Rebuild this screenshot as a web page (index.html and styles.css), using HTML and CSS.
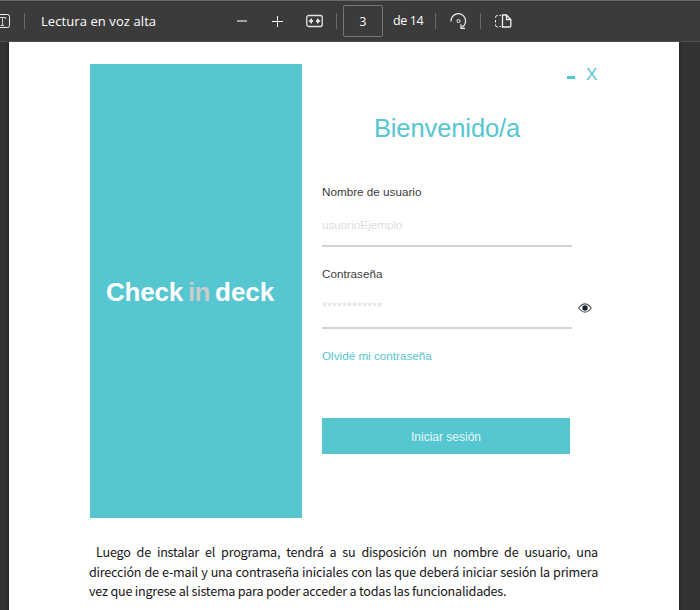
FILE: index.html
```
<!DOCTYPE html>
<html lang="es">
<head>
<meta charset="utf-8">
<title>Manual</title>
<link rel="stylesheet" href="styles.css">
</head>
<body>
<header class="toolbar">
  <svg class="icon-text" width="11" height="16" viewBox="0 0 11 16" fill="none" stroke="#f0f0f0"><path d="M0 1.500H7.500a2 2 0 0 1 2 2V12.500a2 2 0 0 1-2 2H0"/><path stroke="#d0d0d0" d="M0 4.500H5.500V6M2.500 4.500V12M0.500 12.500H4"/></svg>
  <span class="divider"></span>
  <span class="read-aloud">Lectura en voz alta</span>
  <svg class="icon-minus" width="10" height="12" viewBox="0 0 10 12"><path fill="#a2a2a2" d="M0 5h10v2H0z"/></svg>
  <svg class="icon-plus" width="11" height="12" viewBox="0 0 11 12" stroke="#fff"><path d="M0 6.500H11M5.500 1V12"/></svg>
  <svg class="icon-fit" width="17" height="14" viewBox="0 0 17 14" fill="none" stroke="#e4e4e4"><rect x=".75" y="1.500" width="15.500" height="11" rx="2" stroke-width="1.300"/><path fill="#e4e4e4" stroke="none" d="M2.500 7 6 4v2h1v2H6v2zM14.500 7 11 4v2h-1v2h1v2z"/></svg>
  <span class="divider divider-page"></span>
  <span class="page-number">3</span>
  <span class="page-total">de 14</span>
  <span class="divider divider-rotate"></span>
  <svg class="icon-rotate" width="18" height="18" viewBox="0 0 18 18" fill="none" stroke="#f0f0f0" stroke-width="1.200"><path d="M1 9.500A7.300 7.300 0 1 1 12 15.300M11 12.200V16.400H15"/><circle cx="8.500" cy="9" r="1.500" stroke="#c8c8c8"/></svg>
  <span class="divider divider-view"></span>
  <svg class="icon-view" width="17" height="14" viewBox="0 0 17 14" fill="none" stroke="#f0f0f0"><path d="M3 1.500H2.500a2 2 0 0 0-2 2V4M.5 6v2.500M.5 10.500v.5a2 2 0 0 0 2 2H3M4.500 1.500H6M4.500 12.500H6"/><path stroke-width="1.300" d="M7.500 1H11.500L15.800 5.500V12a1 1 0 0 1-1 1H7.500zM11.500 1V5.500H15.800"/></svg>
</header>
<div class="viewer">
  <main class="page">
    <section class="login">
      <div class="brand"><span class="word-check">Check</span><span class="word-in">in</span><span class="word-deck">deck</span></div>
      <div class="form">
        <div class="window-controls"><span class="minimize"></span><span class="close">X</span></div>
        <h1>Bienvenido/a</h1>
        <div class="field">
          <div class="label">Nombre de usuario</div>
          <div class="value">usuarioEjemplo</div>
        </div>
        <div class="password-row">
          <div class="field">
            <div class="label label-password">Contraseña</div>
            <div class="value value-password">************</div>
          </div>
          <svg class="eye" width="14" height="10" viewBox="0 0 14 10"><path d="M.7 5Q7-3.200 13.300 5Q7 13.200.7 5z" fill="none" stroke="#55595e" stroke-width="1.200"/><circle cx="7" cy="5" r="2.700" fill="#1c2530"/></svg>
        </div>
        <div class="forgot">Olvidé mi contraseña</div>
        <div class="submit"><span>Iniciar sesión</span></div>
      </div>
    </section>
    <div class="copy">
      <p class="line line-first">Luego de instalar el programa, tendrá a su disposición un nombre de usuario, una</p>
      <p class="line">dirección de e-mail y una contraseña iniciales con las que deberá iniciar sesión la primera</p>
      <p class="line line-last">vez que ingrese al sistema para poder acceder a todas las funcionalidades.</p>
    </div>
  </main>
</div>
</body>
</html>
```
FILE: styles.css
```
* { box-sizing: border-box; }
body { margin: 0; height: 610px; overflow: hidden; background: #333; font-family: "Liberation Sans", Arial, sans-serif; }
.toolbar { display: flex; align-items: center; height: 42px; background: #3b3b3b; border-top: 1px solid #696b6b; border-bottom: 1px solid #4e4e4e; color: #fff; font: 13px/20px "Open Sans", "Noto Sans", sans-serif; }
.toolbar > * { flex: none; }
.divider { width: 1px; height: 16px; background: #6b6b6b; margin-left: 13px; }
.read-aloud { width: 120px; margin-left: 16px; white-space: nowrap; letter-spacing: .08px; }
.icon-minus { margin-left: 76px; }
.icon-plus { margin-left: 25px; }
.icon-fit { margin-left: 23px; }
.page-number { width: 40px; height: 32px; margin-left: 6px; border: 1px solid #777; border-radius: 2px; text-align: center; font-size: 12px; line-height: 31px; }
.page-total { width: 32px; margin-left: 10px; white-space: nowrap; font-size: 12.500px; letter-spacing: -.4px; }
.divider-rotate { margin-left: 10px; }
.icon-rotate { margin-left: 14px; }
.divider-view { margin-left: 12px; }
.icon-view { margin-left: 14px; }
.viewer { height: 568px; padding: 0 21px 0 9px; background: linear-gradient(90deg, #333 4px, #2b2b2b 9px, #2b2b2b 679px, #333 684px); }
.page { height: 568px; padding: 22px 81px 0 81px; background: #fff; }
.login { display: flex; height: 454px; }
.brand { flex: none; display: flex; align-items: center; width: 212px; padding: 1px 0 0 16px; background: #56c6d1; color: #fff; font-size: 26px; font-weight: bold; line-height: 30px; white-space: nowrap; }
.word-check { width: 82px; letter-spacing: -.2px; }
.word-in { width: 27px; color: #c9cccd; letter-spacing: -.6px; }
.form { width: 296px; padding-left: 20px; color: #3c3c3c; font-size: 11.700px; line-height: 16px; }
.window-controls { display: flex; justify-content: flex-end; align-items: center; height: 22px; padding-right: 1px; color: #56c6d1; font-size: 17px; }
.minimize { width: 8px; height: 3px; margin: 5px 11px 0 0; background: #56c6d1; }
.close { width: 11px; }
h1 { height: 30px; margin: 27px 0 40px; color: #56c6d1; font-size: 25.500px; line-height: 30px; font-weight: normal; letter-spacing: -.1px; text-align: center; padding-right: 26px; }
.field { width: 250px; height: 64px; border-bottom: 2px solid #d2d4d7; }
.label { padding-top: 1px; }
.value { margin-top: 17px; color: #dedede; }
.value-password { font-size: 12.900px; }
.password-row { display: flex; align-items: flex-start; margin-top: 18px; }
.eye { margin: 38px 0 0 6px; }
.forgot { margin-top: 19px; color: #56c6d1; }
.submit { display: flex; align-items: center; justify-content: center; width: 248px; height: 36px; margin-top: 54px; padding-top: 2px; background: #56c6d1; color: #e5fafc; font-size: 12px; }
.copy { width: 508px; padding-top: 24px; margin-left: -1px; font: 12.600px/19.500px "Noto Sans CJK SC", sans-serif; letter-spacing: -.22px; color: #161616; }
.line { width: 509px; margin: 0; white-space: nowrap; text-align: justify; text-align-last: justify; }
.line-first { padding-left: 7px; }
.line-last { width: 417px; }
```
